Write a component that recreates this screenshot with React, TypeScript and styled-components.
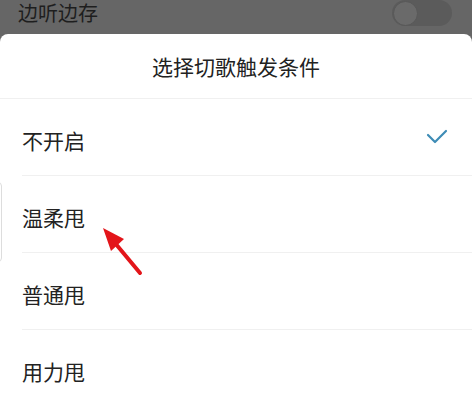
import styled, { createGlobalStyle } from "styled-components";

const GlobalStyle = createGlobalStyle`
  html, body {
    margin: 0;
    padding: 0;
    background: #666666;
  }
  body {
    font-family: "Noto Sans CJK SC", "Noto Sans", sans-serif;
  }
`;

const Page = styled.div`
  position: relative;
  width: 472px;
  height: 404px;
  overflow: hidden;
  background: #666666;
  display: flex;
  flex-direction: column;
`;

const DimRow = styled.div`
  height: 34px;
  flex-shrink: 0;
  display: flex;
  align-items: flex-start;
  justify-content: space-between;
  padding: 1px 20px 0 18px;
  box-sizing: border-box;
`;

const DimLabel = styled.span`
  font-size: 20px;
  line-height: 24px;
  color: #1e1e1e;
`;

const Toggle = styled.div`
  width: 60px;
  height: 26px;
  margin-top: -1px;
  border-radius: 13px;
  background: #5b5b5b;
  display: flex;
  align-items: center;
  padding: 0 1px;
  box-sizing: border-box;
`;

const Thumb = styled.div`
  width: 25px;
  height: 25px;
  border-radius: 50%;
  background: #6a6a6a;
  border: 1px solid #585858;
  box-sizing: border-box;
`;

const Sheet = styled.div`
  flex: 1;
  background: #ffffff;
  border-radius: 8px 8px 0 0;
  display: flex;
  flex-direction: column;
`;

const Header = styled.div`
  height: 64px;
  flex-shrink: 0;
  display: flex;
  align-items: center;
  justify-content: center;
  border-bottom: 1px solid #f0f0f0;
  font-size: 21px;
  color: #222222;
`;

const Option = styled.div`
  height: 77px;
  flex-shrink: 0;
  box-sizing: border-box;
  margin-left: 22px;
  padding: 6px 24px 0 0;
  display: flex;
  align-items: center;
  justify-content: space-between;
  border-bottom: 1px solid #f0f0f0;
  font-size: 21px;
  color: #222222;
`;

const EdgeTab = styled.div`
  position: absolute;
  left: -6px;
  top: 182px;
  width: 8px;
  height: 80px;
  border: 1px solid #dddddd;
  border-radius: 4px;
  box-sizing: border-box;
`;

const Annotation = styled.svg`
  position: absolute;
  left: 0;
  top: 0;
  pointer-events: none;
`;

const options = [
  { label: "不开启", checked: true },
  { label: "温柔甩", checked: false },
  { label: "普通甩", checked: false },
  { label: "用力甩", checked: false },
];

function Check() {
  return (
    <svg width="22" height="16" viewBox="0 0 22 16" style={{ marginTop: -6 }}>
      <polyline
        points="2,6 9,13 20,2"
        fill="none"
        stroke="#3e8cb6"
        strokeWidth="2.2"
        strokeLinecap="round"
        strokeLinejoin="round"
      />
    </svg>
  );
}

export default function App() {
  return (
    <>
      <GlobalStyle />
      <Page>
        <DimRow>
          <DimLabel>边听边存</DimLabel>
          <Toggle>
            <Thumb />
          </Toggle>
        </DimRow>
        <Sheet>
          <Header>选择切歌触发条件</Header>
          {options.map((o) => (
            <Option key={o.label}>
              <span>{o.label}</span>
              {o.checked && <Check />}
            </Option>
          ))}
        </Sheet>
        <EdgeTab />
        <Annotation width="472" height="404">
          <line x1="140" y1="273" x2="115" y2="243" stroke="#e3151a" strokeWidth="4" strokeLinecap="round" />
          <polygon points="103,228 124,239 111,251" fill="#e3151a" />
        </Annotation>
      </Page>
    </>
  );
}
